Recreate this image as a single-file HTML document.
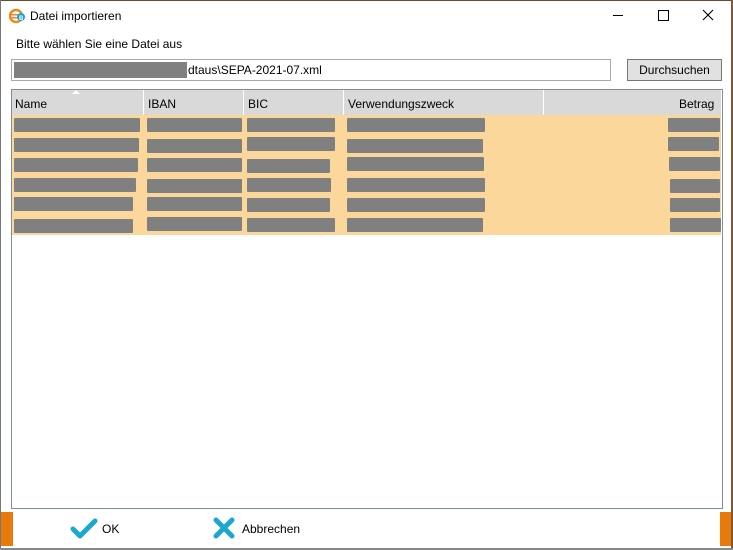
<!DOCTYPE html>
<html><head><meta charset="utf-8"><style>
body{margin:0;width:733px;height:550px;overflow:hidden;background:#fff;font-family:"Liberation Sans",sans-serif;font-size:12px;color:#000;position:relative}
.a{position:absolute}
.g{position:absolute;background:#808080;height:14px;border-radius:1px}
</style></head><body>
<div class="a" style="left:0;top:0;width:733px;height:1px;background:#6b4a2a"></div>
<div class="a" style="left:0;top:0;width:1px;height:550px;background:#777"></div>
<div class="a" style="left:731px;top:0;width:2px;height:550px;background:#7a5a3a"></div>
<div class="a" style="left:0;top:548px;width:733px;height:2px;background:#888"></div>
<svg class="a" style="left:9px;top:8px" width="16" height="16" viewBox="0 0 16 16"><circle cx="7" cy="8" r="6" fill="none" stroke="#f08a1c" stroke-width="2.5"/><rect x="1" y="6" width="8" height="1.5" fill="#f08a1c"/><rect x="1" y="9" width="8" height="1.5" fill="#f08a1c"/><circle cx="12" cy="9" r="4" fill="#1aa0d8"/><text x="10" y="12" font-size="6" fill="#fff" font-family="Liberation Sans" font-weight="bold">B</text></svg>
<div class="a" style="left:30px;top:9px">Datei importieren</div>
<div class="a" style="left:613px;top:15px;width:10px;height:1px;background:#000"></div>
<div class="a" style="left:658px;top:10px;width:9px;height:9px;border:1px solid #000"></div>
<svg class="a" style="left:702px;top:9px" width="12" height="12" viewBox="0 0 12 12"><path d="M1 1 L11 11 M11 1 L1 11" stroke="#000" stroke-width="1.1"/></svg>
<div class="a" style="left:16px;top:37px">Bitte wählen Sie eine Datei aus</div>
<div class="a" style="left:11px;top:59px;width:598px;height:20px;border:1px solid #aaa"></div>
<div class="a" style="left:14px;top:62px;width:173px;height:16px;background:#808080"></div>
<div class="a" style="left:188px;top:63px">dtaus\SEPA-2021-07.xml</div>
<div class="a" style="left:627px;top:59px;width:93px;height:20px;border:1px solid #777;background:#e1e1e1;text-align:center;line-height:20px">Durchsuchen</div>
<div class="a" style="left:11px;top:89px;width:710px;height:418px;border:1px solid #7a8ea8;background:#fff"></div>
<div class="a" style="left:12px;top:90px;width:709px;height:25px;background:#d9d9d9"></div>
<div class="a" style="left:143px;top:90px;width:1px;height:25px;background:#fff"></div>
<div class="a" style="left:243px;top:90px;width:1px;height:25px;background:#fff"></div>
<div class="a" style="left:343px;top:90px;width:1px;height:25px;background:#fff"></div>
<div class="a" style="left:543px;top:90px;width:1px;height:25px;background:#fff"></div>
<div class="a" style="left:72px;top:90px;width:0;height:0;border-left:4px solid transparent;border-right:4px solid transparent;border-bottom:4px solid #fff"></div>
<div class="a" style="left:15px;top:97px">Name</div>
<div class="a" style="left:148px;top:97px">IBAN</div>
<div class="a" style="left:248px;top:97px">BIC</div>
<div class="a" style="left:348px;top:97px">Verwendungszweck</div>
<div class="a" style="left:679px;top:97px">Betrag</div>
<div class="a" style="left:12px;top:115px;width:709px;height:120px;background:#fcd79b"></div>
<div class="g" style="left:14px;top:118px;width:126px"></div><div class="g" style="left:147px;top:118px;width:95px"></div><div class="g" style="left:247px;top:118px;width:88px"></div><div class="g" style="left:347px;top:118px;width:138px"></div><div class="g" style="left:668px;top:118px;width:52px"></div>
<div class="g" style="left:14px;top:138px;width:125px"></div><div class="g" style="left:147px;top:139px;width:95px"></div><div class="g" style="left:247px;top:137px;width:88px"></div><div class="g" style="left:347px;top:139px;width:136px"></div><div class="g" style="left:668px;top:137px;width:51px"></div>
<div class="g" style="left:14px;top:158px;width:124px"></div><div class="g" style="left:147px;top:158px;width:95px"></div><div class="g" style="left:247px;top:159px;width:83px"></div><div class="g" style="left:347px;top:157px;width:137px"></div><div class="g" style="left:669px;top:157px;width:51px"></div>
<div class="g" style="left:14px;top:178px;width:122px"></div><div class="g" style="left:147px;top:179px;width:95px"></div><div class="g" style="left:247px;top:178px;width:84px"></div><div class="g" style="left:347px;top:178px;width:138px"></div><div class="g" style="left:670px;top:179px;width:50px"></div>
<div class="g" style="left:14px;top:197px;width:119px"></div><div class="g" style="left:147px;top:197px;width:95px"></div><div class="g" style="left:247px;top:198px;width:83px"></div><div class="g" style="left:347px;top:198px;width:138px"></div><div class="g" style="left:670px;top:198px;width:50px"></div>
<div class="g" style="left:14px;top:219px;width:119px"></div><div class="g" style="left:147px;top:217px;width:95px"></div><div class="g" style="left:247px;top:218px;width:88px"></div><div class="g" style="left:347px;top:218px;width:136px"></div><div class="g" style="left:670px;top:218px;width:51px"></div>
<div class="a" style="left:1px;top:512px;width:12px;height:34px;background:#e87a0c"></div>
<div class="a" style="left:720px;top:512px;width:11px;height:34px;background:#e87a0c"></div>
<svg class="a" style="left:70px;top:518px" width="28" height="22" viewBox="0 0 28 22"><path d="M3 11 L10 18 L25 3" fill="none" stroke="#1aa8cf" stroke-width="5" stroke-linecap="round" stroke-linejoin="round"/></svg>
<div class="a" style="left:102px;top:522px">OK</div>
<svg class="a" style="left:213px;top:517px" width="22" height="22" viewBox="0 0 22 22"><path d="M3 3 L19 19 M19 3 L3 19" stroke="#1aa8cf" stroke-width="5" stroke-linecap="round"/></svg>
<div class="a" style="left:242px;top:522px">Abbrechen</div>
</body></html>
